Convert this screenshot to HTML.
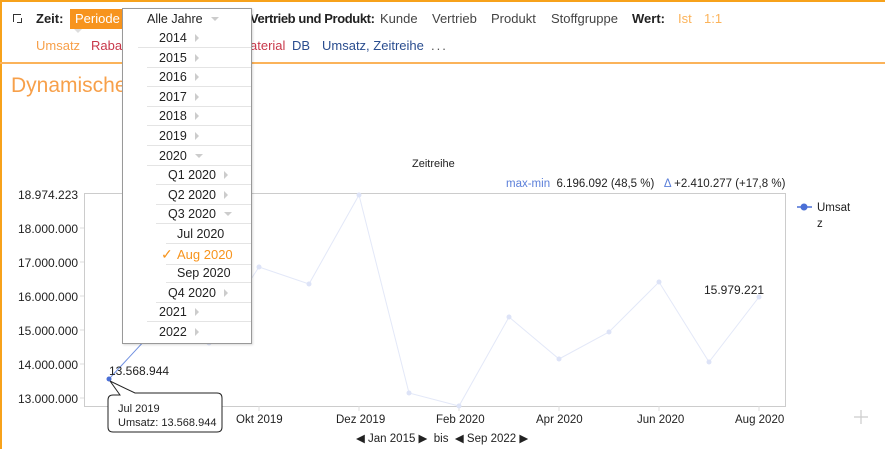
<!DOCTYPE html>
<html><head><meta charset="utf-8"><style>
*{margin:0;padding:0;box-sizing:border-box}
body{width:885px;height:449px;overflow:hidden;background:#fff;font-family:"Liberation Sans",sans-serif;font-size:12px;color:#222;position:relative}
.a{position:absolute;white-space:nowrap}
.dd{position:absolute;left:122px;top:8px;width:130px;height:336px;background:#fff;border:1px solid #999;box-shadow:1px 1px 2px rgba(0,0,0,.15)}
.it{position:absolute;height:19px;line-height:19px;border-bottom:1px solid #e4e4e4;right:0;font-size:12.5px;color:#222}
.ar{display:inline-block;width:0;height:0;border-top:4px solid transparent;border-bottom:4px solid transparent;border-left:4px solid #ccc;margin-left:8px;vertical-align:0}
.dn{display:inline-block;width:0;height:0;border-left:4px solid transparent;border-right:4px solid transparent;border-top:4px solid #ccc;margin-left:8px;vertical-align:2px}
</style></head><body>
<div class="a" style="left:0;top:0;width:885px;height:2px;background:#f7a21b"></div>
<div class="a" style="left:0;top:0;width:2px;height:449px;background:#f7a21b"></div>
<div class="a" style="left:0;top:62px;width:885px;height:2px;background:#fbb35a"></div>
<div class="a" style="left:13px;top:14px;width:8px;height:8px;border-left:1.5px solid #333;border-top:1.5px solid #333"></div>
<div class="a" style="left:17px;top:18px;width:5px;height:5px;border-right:1.5px solid #333;border-bottom:1.5px solid #333"></div>
<div class="a" style="left:36px;top:11px;font-weight:bold;font-size:13px">Zeit:</div>
<div class="a" style="left:70px;top:9px;width:55px;height:20px;background:#f7941d;color:#fff;font-size:13px;line-height:20px;padding-left:5px">Periode</div>
<div class="a" style="left:74px;top:29px;border-left:4px solid transparent;border-right:4px solid transparent;border-top:4px solid #ddd"></div>
<div class="a" style="left:250px;top:11px;font-weight:bold;font-size:13px;letter-spacing:-0.4px">Vertrieb und Produkt:</div>
<div class="a" style="left:380px;top:11px;font-size:13px;color:#444">Kunde</div>
<div class="a" style="left:432px;top:11px;font-size:13px;color:#444">Vertrieb</div>
<div class="a" style="left:491px;top:11px;font-size:13px;color:#444">Produkt</div>
<div class="a" style="left:551px;top:11px;font-size:13px;color:#444">Stoffgruppe</div>
<div class="a" style="left:632px;top:11px;font-weight:bold;font-size:13px">Wert:</div>
<div class="a" style="left:678px;top:11px;font-size:13px;color:#fbb35a">Ist</div>
<div class="a" style="left:704px;top:11px;font-size:13px;color:#fbb35a">1:1</div>
<div class="a" style="left:36px;top:38px;font-size:13px;color:#f7a04a">Umsatz</div>
<div class="a" style="left:91px;top:38px;font-size:13px;color:#c8384a">Rabatt</div>
<div class="a" style="left:250px;top:38px;font-size:13px;color:#c8384a">aterial</div>
<div class="a" style="left:292px;top:38px;font-size:13px;color:#2a4d8f">DB</div>
<div class="a" style="left:322px;top:38px;font-size:13px;color:#2a4d8f">Umsatz, Zeitreihe</div>
<div class="a" style="left:431px;top:38px;font-size:13px;color:#555;letter-spacing:2px">...</div>
<div class="a" style="left:11px;top:74px;font-size:21px;color:#f7a04a">Dynamische</div>
<div class="a" style="left:412px;top:158px;font-size:11px">Zeitreihe</div>
<div class="a" style="left:506px;top:178px;font-size:11.5px"><span style="color:#5b7fd9">max-min</span>&nbsp; 6.196.092 (48,5 %) &nbsp; <span style="color:#5b7fd9">Δ</span> +2.410.277 (+17,8 %)</div>
<svg class="a" style="left:0;top:0" width="885" height="449">
<rect x="84.5" y="193.5" width="701" height="213" fill="none" stroke="#ccc"/>
<g stroke="#ddd"><line x1="259" y1="406" x2="259" y2="411"/><line x1="359" y1="406" x2="359" y2="411"/><line x1="459" y1="406" x2="459" y2="411"/><line x1="559" y1="406" x2="559" y2="411"/><line x1="659" y1="406" x2="659" y2="411"/><line x1="759" y1="406" x2="759" y2="411"/>
<line x1="80" y1="228" x2="84" y2="228"/><line x1="80" y1="262" x2="84" y2="262"/><line x1="80" y1="296" x2="84" y2="296"/><line x1="80" y1="330" x2="84" y2="330"/><line x1="80" y1="364" x2="84" y2="364"/><line x1="80" y1="398" x2="84" y2="398"/></g>
<polyline fill="none" stroke="#e3e8f8" points="159,325 209,343 259,267 309,284 359,195 409,393 459,406 509,317 559,359 609,332 659,282 709,362 759,297"/>
<g fill="#dde3f7"><circle cx="209" cy="343" r="2.5"/><circle cx="259" cy="267" r="2.5"/><circle cx="309" cy="284" r="2.5"/><circle cx="359" cy="195" r="2.5"/><circle cx="409" cy="393" r="2.5"/><circle cx="459" cy="406" r="2.5"/><circle cx="509" cy="317" r="2.5"/><circle cx="559" cy="359" r="2.5"/><circle cx="609" cy="332" r="2.5"/><circle cx="659" cy="282" r="2.5"/><circle cx="709" cy="362" r="2.5"/><circle cx="759" cy="297" r="2.5"/></g>
<line x1="109" y1="379" x2="159" y2="325" stroke="#6f8fe0"/>
<circle cx="109" cy="379" r="2.5" fill="#4a6fd6"/>
<path d="M120,395 L110,381 L135,393 L217,393 Q222,393 222,398 L222,427 Q222,432 217,432 L113,432 Q108,432 108,427 L108,400 Q108,395 113,395 Z" fill="#fff" stroke="#222"/>
<line x1="797" y1="207" x2="812" y2="207" stroke="#4a6fd6" stroke-width="1.5"/><circle cx="804" cy="207" r="3.5" fill="#4a6fd6"/>
<path d="M861,410v14M854,417h14" stroke="#ccc" stroke-width="1.2"/>
</svg>
<div class="a" style="left:18px;top:188px;font-size:12px">18.974.223</div>
<div class="a" style="left:18px;top:222px;font-size:12px">18.000.000</div>
<div class="a" style="left:18px;top:256px;font-size:12px">17.000.000</div>
<div class="a" style="left:18px;top:290px;font-size:12px">16.000.000</div>
<div class="a" style="left:18px;top:324px;font-size:12px">15.000.000</div>
<div class="a" style="left:18px;top:358px;font-size:12px">14.000.000</div>
<div class="a" style="left:18px;top:392px;font-size:12px">13.000.000</div>
<div class="a" style="left:109px;top:364px;font-size:12px">13.568.944</div>
<div class="a" style="left:704px;top:283px;font-size:12px">15.979.221</div>
<div class="a" style="left:118px;top:402px;font-size:11px;line-height:14px">Jul 2019<br>Umsatz: 13.568.944</div>
<div class="a" style="left:236px;top:414px;font-size:11.5px">Okt 2019</div>
<div class="a" style="left:336px;top:414px;font-size:11.5px">Dez 2019</div>
<div class="a" style="left:436px;top:414px;font-size:11.5px">Feb 2020</div>
<div class="a" style="left:536px;top:414px;font-size:11.5px">Apr 2020</div>
<div class="a" style="left:637px;top:414px;font-size:11.5px">Jun 2020</div>
<div class="a" style="left:735px;top:414px;font-size:11.5px">Aug 2020</div>
<div class="a" style="left:356px;top:431px;font-size:11.5px">◀ Jan 2015 ▶ &nbsp;bis &nbsp;◀ Sep 2022 ▶</div>
<div class="a" style="left:817px;top:200px;font-size:11.5px;line-height:16px">Umsat<br>z</div>
<div class="dd">
<div class="it" style="left:0;top:1px;border:none;padding-left:24px;font-size:12.5px">Alle Jahre<span class="dn"></span></div>
<div class="it" style="left:15px;top:20px;padding-left:21px">2014<span class="ar"></span></div>
<div class="it" style="left:24px;top:40px;padding-left:12px">2015<span class="ar"></span></div>
<div class="it" style="left:24px;top:59px;padding-left:12px">2016<span class="ar"></span></div>
<div class="it" style="left:24px;top:79px;padding-left:12px">2017<span class="ar"></span></div>
<div class="it" style="left:24px;top:98px;padding-left:12px">2018<span class="ar"></span></div>
<div class="it" style="left:24px;top:118px;padding-left:12px">2019<span class="ar"></span></div>
<div class="it" style="left:24px;top:138px;padding-left:12px">2020<span class="dn"></span></div>
<div class="it" style="left:33px;top:157px;padding-left:12px">Q1 2020<span class="ar"></span></div>
<div class="it" style="left:33px;top:177px;padding-left:12px">Q2 2020<span class="ar"></span></div>
<div class="it" style="left:33px;top:196px;padding-left:12px">Q3 2020<span class="dn"></span></div>
<div class="it" style="left:43px;top:216px;padding-left:11px">Jul 2020</div>
<div class="it" style="left:0;top:236px;padding-left:54px;color:#f7941d;border:none;font-size:13px"><span style="position:absolute;left:38px;font-size:14px">✓</span>Aug 2020</div>
<div class="a" style="left:43px;top:255px;right:0;height:1px;background:#e4e4e4"></div>
<div class="it" style="left:43px;top:255px;padding-left:11px">Sep 2020</div>
<div class="it" style="left:33px;top:275px;padding-left:12px">Q4 2020<span class="ar"></span></div>
<div class="it" style="left:24px;top:294px;padding-left:12px">2021<span class="ar"></span></div>
<div class="it" style="left:24px;top:314px;padding-left:12px;border:none">2022<span class="ar"></span></div>
</div>
</body></html>
